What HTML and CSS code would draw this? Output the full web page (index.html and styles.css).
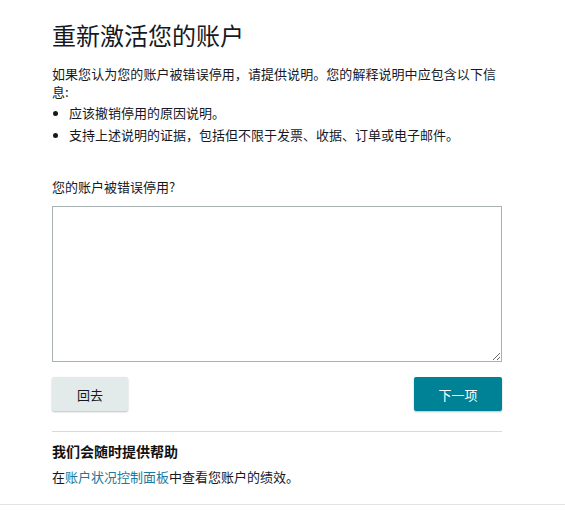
FILE: index.html
```html
<!DOCTYPE html>
<html lang="zh-CN">
<head>
<meta charset="utf-8">
<title>重新激活您的账户</title>
<link rel="stylesheet" href="styles.css">
</head>
<body>
<main class="page">
  <h1 class="title">重新激活您的账户</h1>
  <p class="intro">如果您认为您的账户被错误停用，请提供说明。您的解释说明中应包含以下信息:</p>
  <ul class="bullets">
    <li class="bullet"><span class="dot"></span><span>应该撤销停用的原因说明。</span></li>
    <li class="bullet"><span class="dot"></span><span>支持上述说明的证据，包括但不限于发票、收据、订单或电子邮件。</span></li>
  </ul>
  <label class="label" for="reason">您的账户被错误停用?</label>
  <textarea id="reason" class="textarea"></textarea>
  <div class="actions">
    <button class="btn btn-back">回去</button>
    <button class="btn btn-next">下一项</button>
  </div>
  <hr class="divider">
  <h2 class="help-title">我们会随时提供帮助</h2>
  <p class="help-text">在<a class="link" href="#">账户状况控制面板</a>中查看您账户的绩效。</p>
</main>
<div class="footer-line"></div>
</body>
</html>
```

FILE: styles.css
```css
html, body {
  margin: 0;
  padding: 0;
  background: #ffffff;
}
body {
  font-family: "Noto Sans CJK SC", "Noto Sans", "Liberation Sans", sans-serif;
  color: #16191f;
}
.page {
  width: 450px;
  padding: 0 0 0 52px;
  display: flex;
  flex-direction: column;
}
.title {
  margin: 19px 0 0;
  font-size: 24px;
  line-height: 32px;
  font-weight: 400;
  color: #16191f;
}
.intro {
  margin: 14px 0 0;
  max-width: 444px;
  font-size: 13px;
  line-height: 18px;
  text-align: justify;
}
.bullets {
  list-style: none;
  margin: 1px 0 0;
  padding: 0;
}
.bullet {
  display: flex;
  align-items: center;
  font-size: 13px;
  line-height: 22px;
}
.dot {
  width: 5px;
  height: 5px;
  border-radius: 50%;
  background: #16191f;
  margin: 0 11px 0 1px;
  flex: none;
}
.label {
  margin-top: 32px;
  font-size: 13px;
  line-height: 18px;
  color: #16191f;
}
.textarea {
  margin-top: 10px;
  box-sizing: border-box;
  width: 450px;
  height: 156px;
  border: 1px solid #a7b1b1;
  border-radius: 0;
  padding: 4px;
  font-family: inherit;
  resize: vertical;
}
.actions {
  margin-top: 15px;
  display: flex;
  justify-content: space-between;
}
.btn {
  height: 34px;
  border: none;
  border-radius: 2px;
  font-family: inherit;
  font-size: 13px;
  box-shadow: 0 1px 2px rgba(0, 0, 0, 0.25);
  cursor: pointer;
}
.btn-back {
  width: 76px;
  background: #e3eaea;
  color: #16191f;
}
.btn-next {
  width: 88px;
  background: #008296;
  color: #ffffff;
}
.divider {
  margin: 20px 0 0;
  border: none;
  border-top: 1px solid #d5dbdb;
  width: 450px;
}
.help-title {
  margin: 10px 0 0;
  font-size: 14px;
  line-height: 18px;
  font-weight: 700;
  color: #111111;
}
.help-text {
  margin: 8px 0 0;
  font-size: 13px;
  line-height: 18px;
}
.link {
  color: #1b7a9c;
  text-decoration: none;
}
.footer-line {
  margin-top: 18px;
  height: 1px;
  background: #e3e3e3;
}
```
